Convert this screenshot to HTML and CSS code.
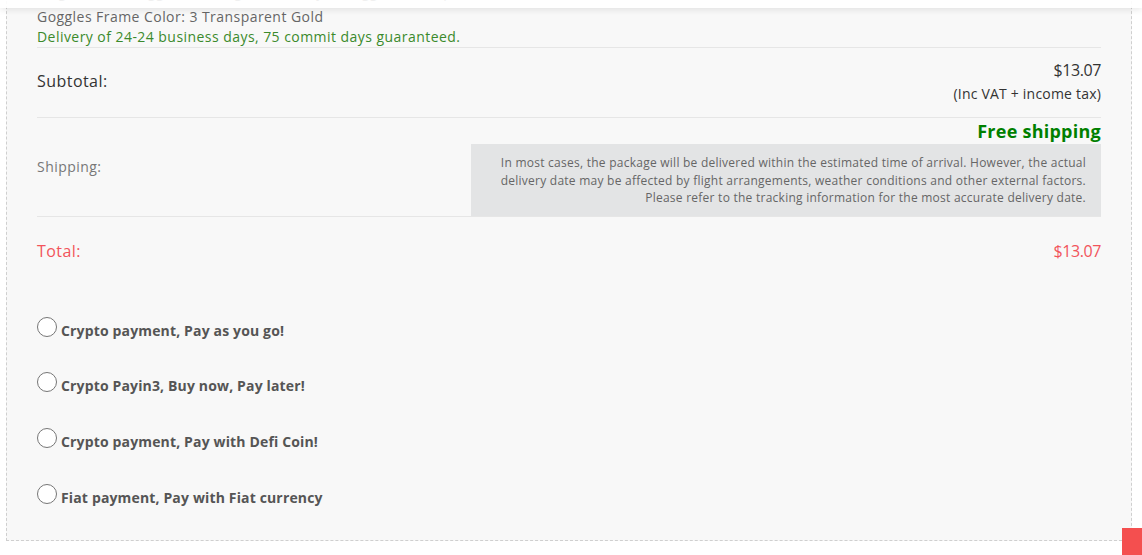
FILE: index.html
```html
<!DOCTYPE html>
<html lang="en">
<head>
<meta charset="utf-8">
<title>Order summary</title>
<link rel="stylesheet" href="styles.css">
</head>
<body>
<div class="topbar"></div>
<main class="card">
  <section class="item">
    <div class="item-head">
      <span class="item-title">Magnetic Ski Goggles Anti-fog Double Layer Goggles with Spherical Lens</span>
      <span class="item-qty">1 x $6.53</span>
    </div>
    <div class="item-attr">Goggles Frame Color: 3 Transparent Gold</div>
    <div class="item-delivery">Delivery of 24-24 business days, 75 commit days guaranteed.</div>
  </section>

  <section class="row subtotal">
    <div class="label">Subtotal:</div>
    <div class="value">
      <div class="amount">$13.07</div>
      <div class="note">(Inc VAT + income tax)</div>
    </div>
  </section>

  <section class="row shipping">
    <div class="label">Shipping:</div>
    <div class="value">
      <div class="free">Free shipping</div>
      <div class="ship-info">In most cases, the package will be delivered within the estimated time of arrival. However, the actual delivery date may be affected by flight arrangements, weather conditions and other external factors. Please refer to the tracking information for the most accurate delivery date.</div>
    </div>
  </section>

  <section class="row total">
    <div class="label">Total:</div>
    <div class="value amount-red">$13.07</div>
  </section>

  <section class="payments">
    <label class="pay"><span class="radio"></span><span class="pay-text">Crypto payment, Pay as you go!</span></label>
    <label class="pay"><span class="radio"></span><span class="pay-text">Crypto Payin3, Buy now, Pay later!</span></label>
    <label class="pay"><span class="radio"></span><span class="pay-text">Crypto payment, Pay with Defi Coin!</span></label>
    <label class="pay"><span class="radio"></span><span class="pay-text">Fiat payment, Pay with Fiat currency</span></label>
  </section>
</main>
<a class="to-top" href="#"></a>
</body>
</html>
```

FILE: styles.css
```css
* { box-sizing: border-box; }

html, body {
  margin: 0;
  padding: 0;
  background: #ffffff;
  overflow: hidden;
}

body {
  font-family: "Open Sans", "Liberation Sans", sans-serif;
  color: #555;
  font-size: 14px;
  letter-spacing: 0.45px;
}

.topbar {
  position: fixed;
  top: 0;
  left: 0;
  right: 0;
  height: 8px;
  background: rgba(255, 255, 255, 0.9);
  box-shadow: 0 2px 6px rgba(0, 0, 0, 0.09);
  z-index: 5;
}

.card {
  margin: -14px 10px 14px 6px;
  border: 1px dashed #cfcfcf;
  background: #f8f8f8;
  padding: 0 30px 16px 30px;
}

.item {
  border-bottom: 1px solid #e6e6e6;
}

.item-head {
  display: flex;
  justify-content: space-between;
  line-height: 20px;
  color: #666;
  margin-top: -5px;
  margin-bottom: 5px;
}

.item-qty { color: #777; letter-spacing: 0; }

.item-attr {
  line-height: 20px;
  color: #666;
}

.item-delivery {
  line-height: 20px;
  color: #3b8a2c;
}

.row {
  display: flex;
  justify-content: space-between;
  align-items: center;
}

.subtotal {
  padding: 10px 0 11px;
  border-bottom: 1px solid #e6e6e6;
  color: #333;
}

.subtotal .label {
  font-size: 16px;
  margin-bottom: 3px;
}

.subtotal .value { text-align: right; }

.amount {
  font-size: 16px;
  line-height: 24px;
  letter-spacing: -0.4px;
}

.note {
  font-size: 14px;
  line-height: 24px;
  letter-spacing: 0.2px;
}

.shipping {
  border-bottom: 1px solid #e6e6e6;
}

.shipping .label {
  color: #777;
  font-size: 14px;
}

.shipping .value {
  display: flex;
  flex-direction: column;
  align-items: flex-end;
}

.free {
  color: #008000;
  font-weight: 700;
  font-size: 18px;
  line-height: 26px;
  letter-spacing: 0.25px;
}

.ship-info {
  width: 630px;
  background: #e3e4e5;
  color: #666;
  font-size: 12px;
  line-height: 17.5px;
  letter-spacing: 0.25px;
  text-align: right;
  padding: 10px 15px 9px 20px;
}

.total {
  padding: 22px 0 21px;
  color: #f2545b;
  font-size: 16px;
  line-height: 24px;
}

.amount-red { letter-spacing: -0.4px; }

.payments {
  margin-top: 18px;
  display: flex;
  flex-direction: column;
}

.pay {
  height: 55.7px;
  display: flex;
  align-items: flex-start;
  gap: 4px;
  padding-top: 15px;
  cursor: pointer;
}

.radio {
  width: 20px;
  height: 20px;
  border: 1px solid #767676;
  border-radius: 50%;
  background: #ffffff;
  flex: none;
}

.pay-text {
  font-weight: 700;
  color: #555;
  font-size: 14px;
  line-height: 20px;
  letter-spacing: 0.15px;
  margin-top: 4px;
}

.to-top {
  position: fixed;
  right: 0;
  bottom: 0;
  width: 20px;
  height: 27px;
  background: #f44f4f;
}
```
